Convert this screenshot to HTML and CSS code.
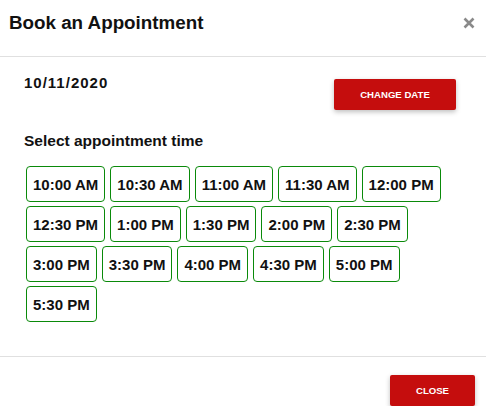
FILE: index.html
```html
<!DOCTYPE html>
<html>
<head>
<meta charset="utf-8">
<link rel="stylesheet" href="styles.css">
</head>
<body>
<div class="modal">
  <div class="header">
    <h1 class="title">Book an Appointment</h1>
    <button class="close-x" aria-label="Close">
      <svg width="12" height="12" viewBox="0 0 12 12"><path d="M1.5 1.5 L10.5 10.5 M10.5 1.5 L1.5 10.5" stroke="#8a8a8a" stroke-width="2.6" stroke-linecap="butt"/></svg>
    </button>
  </div>
  <div class="body">
    <div class="date-row">
      <div class="date">10/11/2020</div>
      <button class="btn-red change">CHANGE DATE</button>
    </div>
    <div class="label">Select appointment time</div>
    <div class="times">
      <button class="time">10:00 AM</button>
      <button class="time">10:30 AM</button>
      <button class="time">11:00 AM</button>
      <button class="time">11:30 AM</button>
      <button class="time">12:00 PM</button>
      <button class="time">12:30 PM</button>
      <button class="time">1:00 PM</button>
      <button class="time">1:30 PM</button>
      <button class="time">2:00 PM</button>
      <button class="time">2:30 PM</button>
      <button class="time">3:00 PM</button>
      <button class="time">3:30 PM</button>
      <button class="time">4:00 PM</button>
      <button class="time">4:30 PM</button>
      <button class="time">5:00 PM</button>
      <button class="time">5:30 PM</button>
    </div>
  </div>
  <div class="footer">
    <button class="btn-red closeb">CLOSE</button>
  </div>
</div>
</body>
</html>
```
FILE: styles.css
```css
* { box-sizing: border-box; }
body {
  margin: 0;
  background: #fff;
  font-family: "Liberation Sans", Arial, sans-serif;
  color: #111;
}
.modal { width: 486px; }
.header {
  height: 57px;
  border-bottom: 1px solid #e0e0e0;
  display: flex;
  justify-content: space-between;
  align-items: flex-start;
  padding: 12px 11px 0 9px;
}
.title {
  margin: 0;
  font-size: 18.8px;
  line-height: 22px;
  font-weight: bold;
  color: #111;
}
.close-x {
  border: 0;
  background: none;
  padding: 0;
  margin-top: 5px;
  width: 12px;
  height: 12px;
  display: block;
}
.close-x svg { display: block; }
.body {
  padding: 16px 30px 34px 24px;
}
.date-row {
  display: flex;
  justify-content: space-between;
  align-items: flex-start;
}
.date {
  font-size: 15px;
  line-height: 20px;
  font-weight: bold;
  letter-spacing: 1px;
}
.btn-red {
  background: #c50d0d;
  color: #fff;
  border: 0;
  border-radius: 2px;
  font-family: "Liberation Sans", Arial, sans-serif;
  font-weight: bold;
  font-size: 9.6px;
  height: 31px;
  box-shadow: 0 2px 5px rgba(0, 0, 0, 0.25);
  padding: 0;
}
.change {
  width: 122px;
  margin-top: 6px;
}
.label {
  margin-top: 21px;
  font-size: 15.5px;
  line-height: 20px;
  font-weight: 600;
}
.times {
  margin-top: 15px;
  padding-left: 2px;
  display: flex;
  flex-wrap: wrap;
  column-gap: 5px;
  row-gap: 4px;
}
.time {
  height: 36px;
  padding: 0 6px;
  border: 1px solid #0a8a0a;
  border-radius: 4px;
  background: #fff;
  color: #111;
  font-family: "Liberation Sans", Arial, sans-serif;
  font-weight: bold;
  font-size: 15px;
}
.footer {
  border-top: 1px solid #e0e0e0;
  display: flex;
  justify-content: flex-end;
  padding: 18px 11px 0 0;
}
.closeb { width: 85px; }
```
